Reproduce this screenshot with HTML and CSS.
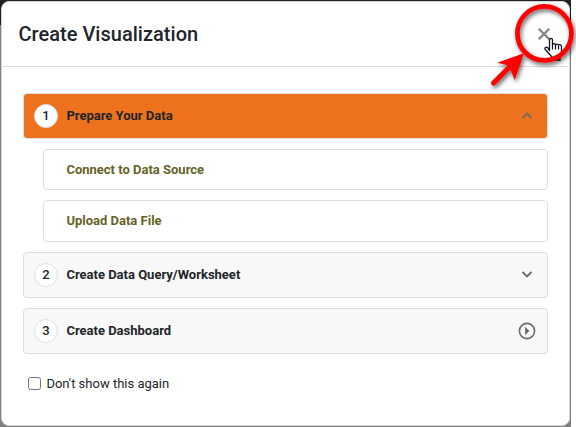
FILE: index.html
```html
<!DOCTYPE html>
<html lang="en">
<head>
<meta charset="utf-8">
<title>Create Visualization</title>
<link rel="stylesheet" href="styles.css">
</head>
<body>
<div class="backdrop">
<section class="dialog">
  <header class="header"><h1>Create Visualization</h1>
    <button class="close" aria-label="Close"><svg width="12" height="12" viewBox="0 0 12 12"><path d="M.8.8l10.4 10.4M11.2.8L.8 11.2" stroke="#8b8b8b" stroke-width="2.4" fill="none"/></svg></button>
  </header>
  <main class="content">
    <div class="step active"><span class="num">1</span><b>Prepare Your Data</b><svg class="icon" width="18" height="18" viewBox="0 0 18 18"><path d="M4.5 11L9 6.5l4.5 4.5" stroke="#746b64" stroke-width="1.9" fill="none"/></svg></div>
    <div class="option first">Connect to Data Source</div>
    <div class="option second">Upload Data File</div>
    <div class="step second-step"><span class="num">2</span><b>Create Data Query/Worksheet</b><svg class="icon" width="18" height="18" viewBox="0 0 18 18"><path d="M4.5 6L9 10.5 13.5 6" stroke="#6b6b6b" stroke-width="1.9" fill="none"/></svg></div>
    <div class="step third-step"><span class="num">3</span><b>Create Dashboard</b><svg class="icon" width="18" height="18" viewBox="0 0 18 18"><circle cx="9" cy="9" r="7.6" stroke="#6b6b6b" stroke-width="1.6" fill="none"/><path d="M7.1 4.8v8.4L11.4 9z" fill="#6b6b6b"/></svg></div>
    <label class="again"><input type="checkbox"><span>Don't show this again</span></label>
  </main>
</section>
</div>
<svg class="annotation" width="576" height="100" viewBox="0 0 576 100">
  <defs><filter id="shadow" x="-30%" y="-30%" width="160%" height="160%"><feDropShadow dx="1.5" dy="2.5" stdDeviation="2" flood-opacity=".6"/></filter></defs>
  <path d="M549.5 51V40q0-1.7 1.5-1.7t1.5 1.7v5q0-1.3 1.5-1.3t1.5 1.5q0-1 1.5-1t1.5 1.5q0-1 1.3-1t1.7 1.8v5.5q0 2.5-1.5 4.5v3.5h-8v-3l-6.7-7.5q-1-1.3.2-2t2.5.4z" fill="#fff" stroke="#111327" stroke-width="1.3"/><path d="M552.5 44.5v5M555.5 45v4.5M558.5 46v3.5" stroke="#111327" stroke-width="1.2"/>
  <g filter="url(#shadow)"><circle cx="544.4" cy="33.4" r="27" stroke="red" stroke-width="4.7" fill="none"/><path d="M493.5 83l16-16" stroke="red" stroke-width="5" stroke-linecap="round"/><path d="M524 53.3L514.7 80 511 70.7 506.7 65 497.3 62.7z" fill="red"/></g>
</svg>
</body>
</html>
```
FILE: styles.css
```css
* { box-sizing: border-box; }
body { margin: 0; width: 576px; height: 427px; overflow: hidden; font: 13px Roboto, sans-serif; color: #212529; background: #fff; }
.backdrop { width: 571px; height: 427px; padding: 1px; background: linear-gradient(#231f20 25px, #808080 25px); }
.dialog { width: 569px; height: 425px; background: #fff; border: 1px solid #d5d5d5; border-radius: 8px; }
.header { height: 65px; border-bottom: 1px solid #dedede; padding: 0 19px 0 16.5px; display: flex; align-items: center; justify-content: space-between; }
h1 { font-size: 20px; line-height: 24px; font-weight: 500; margin: 0; letter-spacing: .02px; }
.close { border: 0; background: none; padding: 0; width: 12px; height: 12px; display: block; margin-bottom: 1px; }
.close svg { display: block; }
.content { padding: 26px 21px 0 21px; }
.step { height: 46px; border: 1px solid #dedfe0; border-radius: 4px; background: #f8f8f8; display: flex; align-items: center; padding: 0 11px 0 10px; }
.active { background: #ee721d; }
.num { width: 24px; height: 24px; border: 1px solid #dedfe0; border-radius: 50%; background: #fff; display: flex; align-items: center; justify-content: center; font-weight: 500; line-height: 20px; margin-right: 8.4px; }
b { font-weight: 700; padding-bottom: 2px; }
.icon { margin-left: auto; margin-bottom: 1px; }
.option { margin-left: 20px; height: 41px; border: 1px solid #dedfe0; border-radius: 4px; padding-left: 22.4px; font-weight: 700; color: #666326; display: flex; align-items: center; }
.first { margin-top: 10px; }
.second { height: 42px; margin-top: 10px; padding-bottom: 2px; }
.second-step, .third-step { margin-top: 10px; }
.again { display: flex; align-items: center; margin-top: 22px; }
.again input { margin: 0 5.4px 0 5px; width: 13px; height: 13px; }
.annotation { position: absolute; left: 0; top: 0; }
```
